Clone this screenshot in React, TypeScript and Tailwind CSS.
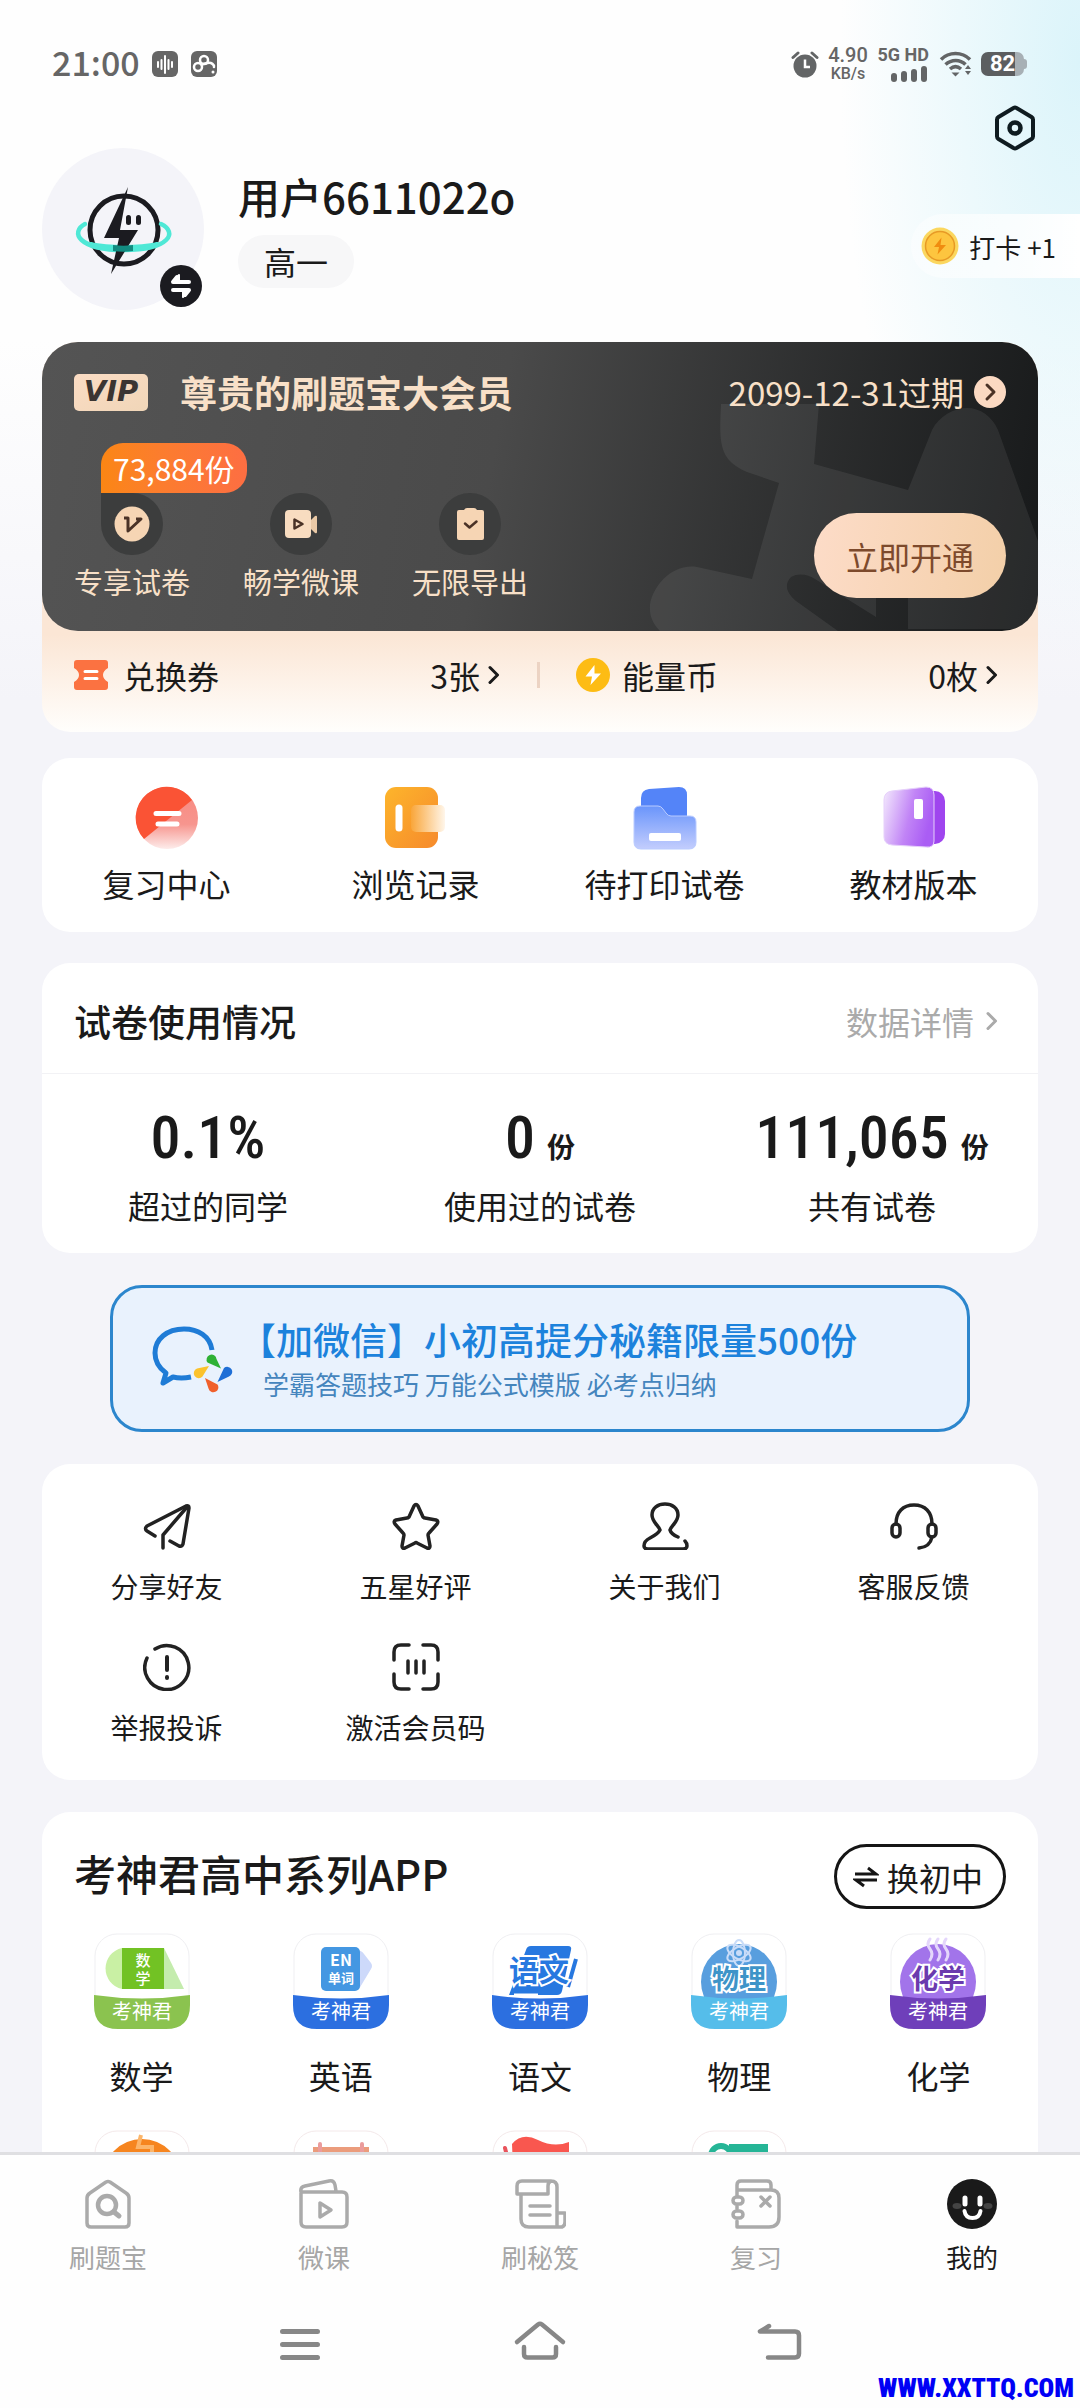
import React from 'react';

type IconItem = { label: string; icon: React.ReactNode };

const Chevron: React.FC<{ className?: string }> = ({ className = '' }) => (
  <svg className={className} width="12" height="20" viewBox="0 0 12 20" fill="none" stroke="currentColor" strokeWidth="3" strokeLinecap="round" strokeLinejoin="round">
    <path d="M2 2.5 9.500 10 2 17.500" />
  </svg>
);

/* ---------- status bar ---------- */

const StatusBar = () => (
  <div className="flex h-[88px] items-center justify-between pt-10 pr-[53px] pl-[52px] text-[#666]">
    <div className="flex items-center">
      <span className="w-[100px] pb-1 text-[34px] leading-[44px] font-medium">21:00</span>
      <svg width="66" height="28" viewBox="0 0 66 28">
        <rect x="0" y="1" width="26" height="26" rx="6" fill="#666" />
        <path d="M6 12v5M9.500 10v9M13 6v17M16.500 10v9M20 12v5" stroke="#fff" strokeWidth="2" strokeLinecap="round" />
        <rect x="39" y="1" width="26" height="26" rx="6" fill="#666" />
        <g fill="none" stroke="#fff" strokeWidth="2.500" strokeLinecap="round">
          <circle cx="52" cy="10" r="4" />
          <circle cx="46" cy="17" r="4" />
          <path d="M49.500 14.500l6-1.500c4-1 7 2 6.500 4" />
        </g>
        <circle cx="61" cy="22" r="1.500" fill="#fff" />
      </svg>
    </div>
    <div className="flex items-center">
      <svg width="28" height="28" viewBox="0 0 28 28" fill="#636566">
        <circle cx="14" cy="16" r="11.500" />
        <path d="M2 7.500 7 3M26 7.500 21 3" stroke="#636566" strokeWidth="3" strokeLinecap="round" />
        <path d="M14 9.500V17h5" fill="none" stroke="#fff" strokeWidth="2.500" />
      </svg>
      <div className="ml-2 w-[42px] text-center font-[Roboto,sans-serif]">
        <p className="text-[20px] leading-5 font-medium">4.90</p>
        <p className="text-[16px] leading-[18px] font-medium">KB/s</p>
      </div>
      <div className="ml-2 w-[52px] text-right font-[Roboto,sans-serif]">
        <p className="text-[18px] leading-[20px] font-bold whitespace-nowrap">5G HD</p>
        <svg className="ml-auto" width="38" height="18" viewBox="0 0 38 18" fill="#636566">
          <rect x="0" y="8" width="6" height="9" rx="3" />
          <rect x="10" y="6" width="6" height="11" rx="3" />
          <rect x="20" y="4" width="6" height="13" rx="3" />
          <rect x="30" y="1" width="6" height="16" rx="3" />
        </svg>
      </div>
      <svg className="ml-2.5" width="34" height="28" viewBox="0 0 34 28" fill="none" stroke="#636566" strokeWidth="3.500">
        <path d="M2 9.500c8-8 21-8 29 0M6.500 14.500c6-5.500 14.500-5.500 20 0M11 19c3.500-3 7.500-3 11 0" />
        <path d="M12.500 22.500h8l-4 4z" fill="#636566" stroke="none" />
        <path d="M26 19l3-4 3 4zM26 21l3 4 3-4z" fill="#636566" stroke="none" />
      </svg>
      <div className="ml-2 flex items-center">
        <span className="flex h-6 w-[43px] items-center justify-center rounded-[7px] bg-linear-to-r from-[#5c5e60] from-80% to-[#a7b0b5] to-80% font-[Roboto,sans-serif] text-[22px] leading-6 font-bold text-white">82</span>
        <span className="h-2.5 w-[3px] rounded-r-full bg-[#a7b0b5]" />
      </div>
    </div>
  </div>
);

/* ---------- profile ---------- */

const Avatar = () => (
  <div className="relative size-[162px] shrink-0 rounded-full bg-[#f4f4f9]">
    <svg width="162" height="162" viewBox="0 0 162 162" fill="none">
      <circle cx="82" cy="82" r="34" stroke="#1b1b20" strokeWidth="5" />
      <path d="M43 76C28 84 36 102 82 102s54-18 37-26" stroke="#4fe8d6" strokeWidth="4.500" strokeLinecap="round" />
      <path d="M48 95c18 9 50 9 68 0-20 4-48 4-68 0z" fill="#4fe8d6" stroke="#4fe8d6" strokeWidth="2" />
      <path d="M86 39 62 90h15l-8 36 27-44H78z" fill="#1b1b20" />
      <path d="M71 97c7 1 14 1 20 0v6c-7 1-13 1-20 0z" fill="#128b80" />
      <rect x="84" y="67" width="5" height="10" rx="2.500" fill="#1b1b20" />
      <rect x="94" y="67" width="5" height="10" rx="2.500" fill="#1b1b20" />
    </svg>
    <button aria-label="切换" className="absolute right-0.5 bottom-[3px] size-[42px] rounded-full bg-[#1b1b20]">
      <svg width="42" height="42" viewBox="0 0 42 42" fill="none" stroke="#fff" strokeWidth="4" strokeLinecap="round" strokeLinejoin="round">
        <path d="M29 17H13l4-5M13 25h16l-4 5" />
        <path d="M13 16l6-6v6zM29 26l-6 6v-6z" fill="#fff" strokeWidth="2" />
      </svg>
    </button>
  </div>
);

const Profile = () => (
  <header>
    <div className="flex h-16 items-end justify-end pr-[41px]">
      <button aria-label="设置">
        <svg width="48" height="48" viewBox="0 0 48 48" fill="none" stroke="#0f1b20" strokeWidth="4" strokeLinejoin="round">
          <path d="M22.500 4 7.500 13q-1.500 1-1.500 2.500v17q0 1.500 1.500 2.500l15 9q1.500.8 3 0l15-9q1.500-1 1.500-2.500v-17q0-1.500-1.500-2.500l-15-9q-1.500-.8-3 0z" />
          <circle cx="24" cy="24" r="5.500" strokeWidth="4.500" />
        </svg>
      </button>
    </div>
    <div className="-mt-1 flex items-start pl-[42px]">
      <Avatar />
      <div className="ml-[34px] flex-1 pt-6">
        <h1 className="text-[42px] leading-[48px] font-medium text-[#1a1a1a]">用户6611022o</h1>
        <button className="mt-[15px] h-[53px] rounded-full bg-[#f7f7f8] px-[26px] text-[32px] leading-[53px] text-[#1a1a1a]">高一</button>
      </div>
      <button className="mt-[66px] flex h-16 items-center rounded-l-full bg-linear-to-r from-white/40 to-white pr-6 pl-2.5 text-[26px] text-[#1a1a1a]">
        <svg width="38" height="38" viewBox="0 0 38 38">
          <circle cx="19" cy="19" r="18.500" fill="#fbd75f" />
          <circle cx="19" cy="19" r="14.500" fill="#fdc53f" stroke="#e79a26" strokeWidth="1.500" />
          <path d="M20.500 10.500 13 20h5l-1.500 7.500L25 18h-5.500z" fill="#f08c10" />
        </svg>
        <span className="ml-2.5">打卡 +1</span>
      </button>
    </div>
  </header>
);

/* ---------- vip card ---------- */

const vipFeatures: IconItem[] = [
  {
    label: '专享试卷',
    icon: (
      <svg width="36" height="36" viewBox="0 0 36 36">
        <circle cx="18" cy="18" r="17.500" fill="#f6d5b4" />
        <path d="M10 12h4v13L27 13h-5" fill="none" stroke="#4a3226" strokeWidth="3" strokeLinejoin="round" />
      </svg>
    ),
  },
  {
    label: '畅学微课',
    icon: (
      <svg width="36" height="36" viewBox="0 0 36 36">
        <rect x="2" y="4" width="26" height="28" rx="4" fill="#f8dcc0" />
        <path d="M28 14l4-4q2-1 2 1v15q0 2-2 1l-4-4z" fill="#eac9a6" />
        <path d="M11.500 13.500v9l8-4.500z" fill="none" stroke="#4a3226" strokeWidth="2.500" strokeLinejoin="round" />
      </svg>
    ),
  },
  {
    label: '无限导出',
    icon: (
      <svg width="36" height="36" viewBox="0 0 36 36">
        <path d="M5 6q0-2 2-2h5q1-2 3-2h7q2 0 3 2h5q2 0 2 2v26q0 2-2 2H7q-2 0-2-2z" fill="#f6d5b4" />
        <path d="M13 17.500l4.500 4 7-6" fill="none" stroke="#4a3226" strokeWidth="2.500" strokeLinecap="round" strokeLinejoin="round" />
      </svg>
    ),
  },
];

const VipCard = () => (
  <section className="mx-[42px] mt-8 rounded-t-[36px] rounded-b-[28px] bg-linear-to-b from-[#fbe6d5] from-75% to-[#fffefc]">
    <div className="relative overflow-hidden rounded-[36px] bg-linear-100 from-[#545454] via-[#4a4a4a] via-45% to-[#17191a] px-8 pt-[30px] pb-[33px] text-[#f8e0c8]">
      <svg className="absolute top-0 right-0" width="400" height="289" viewBox="596 0 400 289">
        <path
          d="M679 62c-2 40-2 56 26 68l32 11-27 96-55-12c-24-4-44 18-47 38-1 12 4 20 10 26h178l-42-30c-10-8-12-17-5-24 8-5 18-2 24 2l61 38v-38h32v50h130v-88L956 88c-6-14-18-22-31-22s-28 8-35 22l-24 60-94-26 5-60z"
          fill="#fff"
          fillOpacity="0.070"
        />
      </svg>
      <div className="relative flex h-10 items-center">
        <span className="flex h-[37px] w-[74px] items-center justify-center rounded-[5px] bg-linear-to-br from-[#fbdcc4] to-[#f0d6b8] font-['DejaVu_Sans',sans-serif] text-[29px] font-bold text-[#3b3532] italic">VIP</span>
        <h2 className="ml-8 flex-1 text-[37px] leading-10 font-bold">尊贵的刷题宝大会员</h2>
        <a href="#vip" className="flex items-center text-[33px] leading-10">
          2099-12-31过期
          <svg className="ml-2.5" width="32" height="32" viewBox="0 0 32 32">
            <circle cx="16" cy="16" r="16" fill="#fbd9c2" />
            <path d="M13 9l7 7-7 7" fill="none" stroke="#4a3226" strokeWidth="3" strokeLinecap="round" strokeLinejoin="round" />
          </svg>
        </a>
      </div>
      <div className="relative mt-[81px] flex items-end justify-between">
        <ul className="flex gap-[53px]">
          {vipFeatures.map((item, i) => (
            <li key={item.label} className="relative flex flex-col items-center">
              <span className={`flex size-[62px] items-center justify-center rounded-full bg-[#3c3d3d] ${i === 0 ? 'rounded-tl-none' : ''}`}>{item.icon}</span>
              <span className="mt-[9px] text-[29px] leading-[34px]">{item.label}</span>
              {i === 0 && (
                <span className="absolute -top-[50px] left-[27px] rounded-t-[22px] rounded-br-[22px] bg-linear-to-r from-[#fb8613] to-[#fd6e42] px-3 text-[30px] leading-[50px] whitespace-nowrap text-white">
                  73,884份
                </span>
              )}
            </li>
          ))}
        </ul>
        <button className="h-[85px] rounded-full bg-linear-100 from-[#fddcc8] to-[#f3cfa8] px-8 text-[32px] text-[#7d4a2c]">立即开通</button>
      </div>
    </div>
    <div className="grid grid-cols-2 pt-[23px] pb-9 text-[32px] leading-[42px] text-[#1a1a1a]">
      <a href="#coupon" className="flex items-center pl-8">
        <svg width="34" height="30" viewBox="0 0 34 30" fill="#fb7241">
          <path d="M3 0h28q3 0 3 3v5q-5 3-5 7t5 7v5q0 3-3 3H3q-3 0-3-3v-5q5-3 5-7T0 8V3q0-3 3-3z" />
          <path d="M11 11.500h12M11 18.500h12" stroke="#fff" strokeWidth="3" strokeLinecap="round" />
        </svg>
        <span className="ml-[15px] flex-1">兑换券</span>
        <span className="mr-2">3张</span>
        <Chevron />
        <span className="ml-[37px] h-[26px] w-[3px] bg-[#ecd3c3]" />
      </a>
      <a href="#coin" className="flex items-center pr-[40px] pl-9">
        <svg width="34" height="34" viewBox="0 0 34 34">
          <circle cx="17" cy="17" r="17" fill="#fdbc14" />
          <path d="M18.500 7 9.500 18.500H16L14.500 27 25 15.500h-6.500z" fill="#fff" />
        </svg>
        <span className="ml-3 flex-1">能量币</span>
        <span className="mr-2">0枚</span>
        <Chevron />
      </a>
    </div>
  </section>
);

/* ---------- quick entries ---------- */

const quickEntries: IconItem[] = [
  {
    label: '复习中心',
    icon: (
      <svg width="64" height="64" viewBox="0 0 64 64">
        <defs>
          <linearGradient id="reviewSoft" x1="0" y1="0" x2="0" y2="1">
            <stop offset="0" stopColor="#f88a80" />
            <stop offset="0.600" stopColor="#f7958e" />
            <stop offset="1" stopColor="#fdeceb" />
          </linearGradient>
        </defs>
        <circle cx="32" cy="32" r="31" fill="url(#reviewSoft)" />
        <path d="M9 53A31 31 0 1 1 57 14z" fill="#fa5335" />
        <path d="M21 27.500h23M23 38h19" stroke="#fff" strokeWidth="5" strokeLinecap="round" />
      </svg>
    ),
  },
  {
    label: '浏览记录',
    icon: (
      <svg width="64" height="64" viewBox="0 0 64 64">
        <defs>
          <linearGradient id="historyBase" x1="0" y1="0" x2="1" y2="1">
            <stop offset="0" stopColor="#fdb52b" />
            <stop offset="1" stopColor="#f68a2c" />
          </linearGradient>
          <linearGradient id="historyTab" x1="0" y1="0" x2="1" y2="0">
            <stop offset="0" stopColor="#f9a63a" />
            <stop offset="1" stopColor="#fff6ea" />
          </linearGradient>
        </defs>
        <rect x="1" y="1" width="53" height="61" rx="11" fill="url(#historyBase)" />
        <rect x="27" y="19" width="34" height="27" rx="5" fill="url(#historyTab)" />
        <path d="M15 22v20" stroke="#fff" strokeWidth="7" strokeLinecap="round" />
      </svg>
    ),
  },
  {
    label: '待打印试卷',
    icon: (
      <svg width="64" height="64" viewBox="0 0 64 64">
        <defs>
          <linearGradient id="printFront" x1="0" y1="0" x2="0" y2="1">
            <stop offset="0" stopColor="#6a95fb" />
            <stop offset="1" stopColor="#c3cdfd" />
          </linearGradient>
        </defs>
        <path d="M8 12Q8 4 16 3l30-2q8 0 8 8v42H8z" fill="#5484f8" />
        <path d="M1 26q0-6 6-6h18q3 0 5 3l3 4q2 3 5 3h19q6 0 6 6v20q0 7-7 7H8q-7 0-7-7z" fill="url(#printFront)" stroke="#b9cbff" strokeWidth="1" />
        <rect x="16" y="47" width="32" height="8" rx="2" fill="#fff" />
      </svg>
    ),
  },
  {
    label: '教材版本',
    icon: (
      <svg width="64" height="64" viewBox="0 0 64 64">
        <defs>
          <linearGradient id="bookFront" x1="0" y1="0" x2="1" y2="0.300">
            <stop offset="0" stopColor="#f4ebfd" />
            <stop offset="0.600" stopColor="#c184f6" />
            <stop offset="1" stopColor="#aa5df4" />
          </linearGradient>
        </defs>
        <rect x="26" y="5" width="37" height="53" rx="10" fill="#9f45ee" />
        <path d="M2 14Q2 6 10 5l34-4q8 0 8 8v46q0 7-8 6l-34-2q-8-1-8-8z" fill="url(#bookFront)" stroke="#e6d0fb" strokeWidth="1" />
        <rect x="32" y="13" width="9" height="20" rx="2" fill="#fff" />
      </svg>
    ),
  },
];

const QuickEntries = () => (
  <nav className="mx-[42px] mt-[26px] grid grid-cols-4 rounded-[28px] bg-white py-7">
    {quickEntries.map((item) => (
      <a key={item.label} href="#entry" className="flex flex-col items-center">
        {item.icon}
        <span className="mt-3 text-[32px] leading-[42px] text-[#1a1a1a]">{item.label}</span>
      </a>
    ))}
  </nav>
);

/* ---------- usage ---------- */

const stats = [
  { value: '0.1%', unit: '', label: '超过的同学' },
  { value: '0', unit: '份', label: '使用过的试卷' },
  { value: '111,065', unit: '份', label: '共有试卷' },
];

const UsageCard = () => (
  <section className="mx-[42px] mt-[31px] rounded-[28px] bg-white text-[#1a1a1a]">
    <div className="flex h-[111px] items-center justify-between border-b border-[#f2f2f5] pt-1.5 pr-[40px] pl-8">
      <h2 className="text-[37px] leading-10 font-medium">试卷使用情况</h2>
      <a href="#detail" className="flex items-center text-[32px] leading-10 text-[#aaa]">
        数据详情
        <Chevron className="ml-3" />
      </a>
    </div>
    <dl className="grid grid-cols-3 pt-8 pb-7">
      {stats.map((s) => (
        <div key={s.label} className="flex flex-col-reverse items-center">
          <dt className="mt-[15px] text-[32px] leading-10">{s.label}</dt>
          <dd className="flex items-baseline font-['Roboto_Condensed',Roboto,sans-serif] text-[60px] leading-16 font-medium">
            {s.value}
            {s.unit && <span className="ml-3 font-['Noto_Sans_CJK_SC',sans-serif] text-[28px] leading-10 font-bold">{s.unit}</span>}
          </dd>
        </div>
      ))}
    </dl>
  </section>
);

const WechatBanner = () => (
  <a href="#wechat" className="mx-[110px] mt-8 flex h-[147px] items-center rounded-[32px] border-3 border-[#2c86cd] bg-[#e9f2fd] pl-[38px]">
    <svg className="shrink-0" width="82" height="68" viewBox="0 0 82 68" fill="none">
      <path d="M61 25C59 11 47 4 33 4 16 4 4 14 4 28c0 9 4 15 11 20l-3 10 10-6q8 2 18 0" stroke="#1f7cd6" strokeWidth="5" strokeLinejoin="round" />
      <path d="M56.500 37.500A5 5 0 1 1 65.500 34L70 43.500z" fill="#2eb135" />
      <path d="M73 43a5 5 0 1 1 5 8.500L66.500 57z" fill="#1f6fd6" />
      <path d="M66.500 59.500a5 5 0 1 1-9 4L54 53z" fill="#f0602c" />
      <path d="M51.500 51.500a5 5 0 1 1-5.500-8L58 41z" fill="#fbc22d" />
    </svg>
    <span className="ml-1.5 flex min-w-0 flex-col whitespace-nowrap">
      <span className="text-[37px] leading-[50px] font-medium text-[#1c82dc]">【加微信】小初高提分秘籍限量500份</span>
      <span className="pl-6 text-[26px] leading-10 text-[#4585bd]">学霸答题技巧 万能公式模版 必考点归纳</span>
    </span>
  </a>
);

/* ---------- services ---------- */

const LineIcon: React.FC<{ children: React.ReactNode }> = ({ children }) => (
  <svg width="48" height="48" viewBox="0 0 48 48" fill="none" stroke="#222" strokeWidth="3.500" strokeLinecap="round" strokeLinejoin="round">
    {children}
  </svg>
);

const services: IconItem[] = [
  {
    label: '分享好友',
    icon: (
      <LineIcon>
        <path d="M12 34l-8-5q-3-2 0-5L43 4q3-1 3 2l-6 36q-1 3-4 2l-9-5" />
        <path d="M44 5 20 33v13" />
      </LineIcon>
    ),
  },
  {
    label: '五星好评',
    icon: (
      <LineIcon>
        <path d="M22 4q2-3 4 0l5 11q1 1 2 1l11 2q3 1 1 4l-8 9q-1 1-1 2l2 11q0 3-3 2l-10-5q-1-1-2 0l-10 5q-3 1-3-2l2-11q0-1-1-2l-8-9q-2-3 1-4l11-2q1 0 2-1z" />
      </LineIcon>
    ),
  },
  {
    label: '关于我们',
    icon: (
      <LineIcon>
        <path d="M37 35q-7-3-8-7c1-4 8-8 8-15C37 6 31 2 24 2S11 6 11 13c0 7 7 11 8 15q-2 4-10 8-6 3-6 8 0 3 4 3h35q4 0 4-3 0-3-2-5" />
      </LineIcon>
    ),
  },
  {
    label: '客服反馈',
    icon: (
      <LineIcon>
        <path d="M6 22C6 10 13 3 24 3s18 7 18 19" />
        <rect x="2" y="22" width="8" height="13" rx="4" />
        <rect x="38" y="22" width="8" height="13" rx="4" />
        <path d="M42 35q-2 10-13 11" />
      </LineIcon>
    ),
  },
  {
    label: '举报投诉',
    icon: (
      <LineIcon>
        <path d="M12 6a22 22 0 1 1-8 9" />
        <path d="M24 14v13M24 34v1" strokeWidth="4" />
      </LineIcon>
    ),
  },
  {
    label: '激活会员码',
    icon: (
      <LineIcon>
        <path d="M2 17V9q0-7 7-7h8M31 2h8q7 0 7 7v8M46 31v8q0 7-7 7h-8M17 46H9q-7 0-7-7v-8" />
        <path d="M16 18v12M24 18v12M32 18v12" />
      </LineIcon>
    ),
  },
];

const Services = () => (
  <nav className="mx-[42px] mt-8 grid grid-cols-4 gap-y-[38px] rounded-[28px] bg-white pt-[38px] pb-[34px]">
    {services.map((item) => (
      <a key={item.label} href="#service" className="flex flex-col items-center">
        {item.icon}
        <span className="mt-[17px] text-[28px] leading-[38px] text-[#1a1a1a]">{item.label}</span>
      </a>
    ))}
  </nav>
);

/* ---------- app series ---------- */

const cjk = "'Noto Sans CJK SC', sans-serif";

const AppTile: React.FC<{ color: string; children: React.ReactNode }> = ({ color, children }) => (
  <svg width="96" height="96" viewBox="0 0 96 96" fontFamily={cjk} textAnchor="middle">
    <rect x="1" y="1" width="94" height="94" rx="22" fill="#fff" stroke="#efeff2" />
    {children}
    <path d="M0 62q48 7 96 0v10q0 24-24 24H24Q0 96 0 72z" fill={color} />
    <text x="48" y="86" fontSize="20" fill="#fff">考神君</text>
  </svg>
);

const apps: IconItem[] = [
  {
    label: '数学',
    icon: (
      <AppTile color="#8bc34f">
        <path d="M28 15a21 21 0 0 0 0 41z" fill="#c9f0a4" />
        <path d="M70 15l20 41H68z" fill="#c4ecad" />
        <rect x="28" y="15" width="42" height="41" fill="#72c224" />
        <text x="49" y="33" fontSize="15" fontWeight="500" fill="#fff">数</text>
        <text x="49" y="51" fontSize="15" fontWeight="500" fill="#fff">学</text>
      </AppTile>
    ),
  },
  {
    label: '英语',
    icon: (
      <AppTile color="#2c6fe0">
        <path d="M62 18q6-2 9 3l7 9q2 3 0 6L66 56z" fill="#cdd9fa" />
        <rect x="28" y="14" width="39" height="44" rx="5" fill="#4497e2" />
        <text x="48" y="33" fontSize="16" fontWeight="700" fill="#fff">EN</text>
        <text x="48" y="50" fontSize="13" fontWeight="700" fill="#fff">单词</text>
      </AppTile>
    ),
  },
  {
    label: '语文',
    icon: (
      <AppTile color="#2c6fe0">
        <path d="M34 17q1-4 5-4h37q4 0 3 4L70 58q-1 4-5 4H17z" fill="#2778e0" />
        <path d="M22 62h24" stroke="#fff" strokeWidth="3" />
        <path d="M84 26l-8 28" stroke="#2778e0" strokeWidth="4" />
        <text x="47" y="48" fontSize="30" fontWeight="700" fill="#2778e0" stroke="#fff" strokeWidth="4" paintOrder="stroke">语文</text>
      </AppTile>
    ),
  },
  {
    label: '物理',
    icon: (
      <AppTile color="#55bdea">
        <circle cx="48" cy="49" r="38" fill="#589ede" />
        <g fill="none" stroke="#c9dcf8" strokeWidth="2">
          <ellipse cx="48" cy="20" rx="6" ry="13" />
          <ellipse cx="48" cy="20" rx="6" ry="13" transform="rotate(60 48 20)" />
          <ellipse cx="48" cy="20" rx="6" ry="13" transform="rotate(120 48 20)" />
        </g>
        <circle cx="48" cy="20" r="3" fill="#c9dcf8" />
        <text x="48" y="56" fontSize="27" fontWeight="700" fill="#3e94c8" stroke="#fff" strokeWidth="4" paintOrder="stroke">物理</text>
      </AppTile>
    ),
  },
  {
    label: '化学',
    icon: (
      <AppTile color="#6f3fba">
        <circle cx="48" cy="49" r="38" fill="#a274ea" />
        <path d="M40 6q-4 5 0 10t0 11M48 6q-4 5 0 10t0 11M56 6q-4 5 0 10t0 11" fill="none" stroke="#e4d6fb" strokeWidth="3" strokeLinecap="round" />
        <text x="48" y="56" fontSize="27" fontWeight="700" fill="#6a3aae" stroke="#fff" strokeWidth="4" paintOrder="stroke">化学</text>
      </AppTile>
    ),
  },
];

// second row, partly under the tab bar
const moreApps = [
  <g key="orange">
    <circle cx="48" cy="48" r="39" fill="#f6851f" />
    <path d="M47 5l-3 12h14v12H40" fill="none" stroke="#fcb56a" strokeWidth="4" />
  </g>,
  <g key="calendar">
    <path d="M20 17h56v50H20z" fill="#eb9c7c" />
    <path d="M27 14v8M69 14v8" stroke="#eb9c9c" strokeWidth="4" strokeLinecap="round" />
  </g>,
  <g key="flag">
    <path d="M20 14q10-12 26-4t31 2v50H22z" fill="#f9574f" />
    <path d="M13 18l2 8" stroke="#e9545c" strokeWidth="4" strokeLinecap="round" />
  </g>,
  <g key="green">
    <path d="M38 14h39v50H38z" fill="#25b596" />
    <circle cx="30" cy="26" r="10" fill="#fff" stroke="#25b596" strokeWidth="6" />
  </g>,
];

const AppSeries = () => (
  <section className="mx-[42px] mt-8 rounded-[28px] bg-white pt-8 pb-8">
    <div className="flex items-start justify-between px-8">
      <h2 className="text-[42px] leading-[58px] font-medium text-[#1a1a1a]">考神君高中系列APP</h2>
      <button className="flex h-[65px] items-center rounded-full border-3 border-[#151515] pr-5 pl-4 text-[32px] text-[#1a1a1a]">
        <svg width="26" height="24" viewBox="0 0 26 24" fill="none" stroke="#151515" strokeWidth="3">
          <path d="M2 9h21l-8-6M24 15H3l8 6" />
        </svg>
        <span className="ml-2">换初中</span>
      </button>
    </div>
    <div className="mt-6 grid grid-cols-5 gap-y-[33px]">
      {apps.map((item) => (
        <a key={item.label} href="#app" className="flex flex-col items-center">
          {item.icon}
          <span className="mt-6 text-[32px] leading-11 text-[#1a1a1a]">{item.label}</span>
        </a>
      ))}
      {moreApps.map((art, i) => (
        <a key={i} href="#app" className="flex flex-col items-center">
          <svg width="96" height="96" viewBox="0 0 96 96">
            <rect x="1" y="1" width="94" height="94" rx="22" fill="#fff" stroke="#f4e9ea" />
            {art}
          </svg>
        </a>
      ))}
    </div>
  </section>
);

/* ---------- tab bar ---------- */

const TabIcon: React.FC<{ children: React.ReactNode }> = ({ children }) => (
  <svg width="52" height="52" viewBox="0 0 52 52" fill="none" stroke="#aaa" strokeWidth="3.500" strokeLinecap="round" strokeLinejoin="round">
    {children}
  </svg>
);

const tabs: IconItem[] = [
  {
    label: '刷题宝',
    icon: (
      <TabIcon>
        <path d="M24 4q2-1 4 0l16 11q3 2 3 5v25q0 4-4 4H9q-4 0-4-4V20q0-3 3-5z" />
        <circle cx="25" cy="27" r="9" strokeWidth="4.500" />
        <path d="M32 34l5 4" strokeWidth="5" />
      </TabIcon>
    ),
  },
  {
    label: '微课',
    icon: (
      <TabIcon>
        <path d="M3 15v29q0 5 5 5h36q5 0 5-5V19q0-5-5-5H3q-1-5 4-6l24-5q5-1 6 4l1 6" />
        <path d="M22 25v14l11-7z" />
      </TabIcon>
    ),
  },
  {
    label: '刷秘笈',
    icon: (
      <TabIcon>
        <path d="M34 16H3V8q0-5 5-5h29q6 0 6 6v39M34 16V8q0-4 3-5M7 16v25q0 8 8 8h33q3-1 3-5v-9h-8" />
        <path d="M16 28h20M16 37h20" />
      </TabIcon>
    ),
  },
  {
    label: '复习',
    icon: (
      <TabIcon>
        <path d="M7 18V7q0-4 4-4h26q4 0 4 4v4M7 12h34q8 0 8 8v19q0 10-10 10H7v-6M7 28v3" />
        <rect x="3" y="19" width="10" height="7" rx="3.500" />
        <rect x="3" y="33" width="10" height="7" rx="3.500" />
        <path d="M31 19l9 9M40 19l-9 9" />
      </TabIcon>
    ),
  },
  {
    label: '我的',
    icon: (
      <svg width="52" height="52" viewBox="0 0 52 52" fill="none">
        <circle cx="26" cy="26" r="25" fill="#1a1a1a" />
        <ellipse cx="11" cy="28" rx="4.500" ry="3" fill="#444" />
        <ellipse cx="42" cy="28" rx="4.500" ry="3" fill="#444" />
        <path d="M19 20v6M34 20v6" stroke="#fff" strokeWidth="5" strokeLinecap="round" />
        <path d="M18.500 33q1 7 8 7t8-7" stroke="#fff" strokeWidth="4" strokeLinecap="round" />
      </svg>
    ),
  },
];

const TabBar = () => (
  <nav className="grid grid-cols-5 border-t-3 border-[#dfdfe2] pt-[23px] pb-[47px]">
    {tabs.map((item) => (
      <a key={item.label} href="#tab" className={`flex flex-col items-center ${item.label === '我的' ? 'text-[#1a1a1a]' : 'text-[#a6a6a6]'}`}>
        {item.icon}
        <span className="mt-[11px] text-[26px] leading-8">{item.label}</span>
      </a>
    ))}
  </nav>
);

const SystemBar = () => (
  <div className="flex justify-center gap-[184px] text-[#878787]">
    <button aria-label="菜单">
      <svg width="56" height="48" viewBox="0 0 56 48" stroke="currentColor" strokeWidth="5" strokeLinecap="round">
        <path d="M10.500 11.500h35M10.500 24.500h35M10.500 37.500h35" />
      </svg>
    </button>
    <button aria-label="主页">
      <svg width="56" height="48" viewBox="0 0 56 48" fill="none" stroke="currentColor" strokeWidth="4.500" strokeLinecap="round" strokeLinejoin="round">
        <path d="M5 22 26 4.500q2-1.500 4 0L51 22M12 27v7q0 3.500 3.500 3.500h25q3.500 0 3.500-3.500v-7" />
      </svg>
    </button>
    <button aria-label="返回">
      <svg width="56" height="48" viewBox="0 0 56 48" fill="none" stroke="currentColor" strokeWidth="4.500" strokeLinecap="round" strokeLinejoin="round">
        <path d="M17 6l-9 5.500h35q4 0 4 4v18q0 4-4 4H16" />
      </svg>
    </button>
  </div>
);

const App: React.FC = () => {
  return (
    <div className="flex h-screen flex-col bg-[#f4f4f9] font-['Noto_Sans_CJK_SC',sans-serif]">
      <main className="min-h-0 flex-1 overflow-y-auto bg-[radial-gradient(ellipse_240px_600px_at_100%_60px,#dbf4fa,transparent),linear-gradient(#fefefe_340px,#f4f4f9_700px)] [scrollbar-width:none]">
        <StatusBar />
        <Profile />
        <VipCard />
        <QuickEntries />
        <UsageCard />
        <WechatBanner />
        <Services />
        <AppSeries />
      </main>
      <footer className="bg-[#fefefe]">
        <TabBar />
        <SystemBar />
        <p className="pr-1.5 text-right font-['Roboto_Condensed',Roboto,sans-serif] text-[26px] leading-10 font-black text-[#0000f5]">WWW.XXTTQ.COM</p>
      </footer>
    </div>
  );
};

export default App;
